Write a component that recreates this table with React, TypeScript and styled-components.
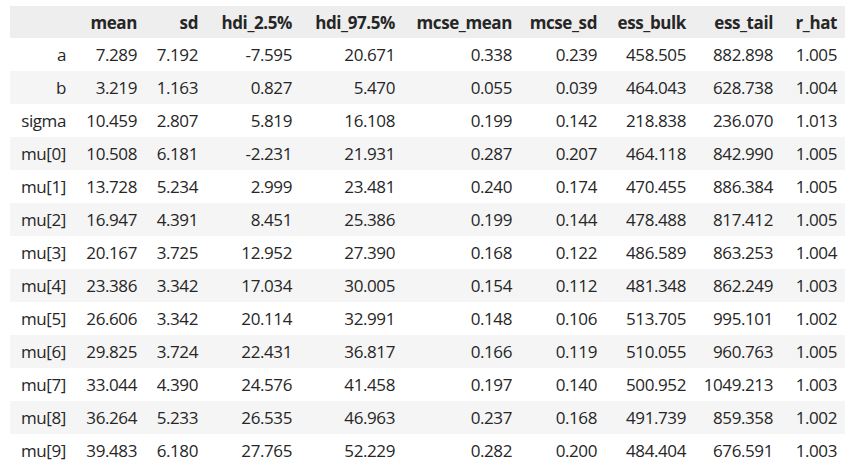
import React from "react";
import styled, { createGlobalStyle } from "styled-components";

const GlobalStyle = createGlobalStyle`
  html, body {
    margin: 0;
    padding: 0;
    background: #fff;
  }
  body {
    font-family: "Open Sans", "Noto Sans", "Liberation Sans", sans-serif;
  }
`;

const columns = [
  { key: "mean", width: 71 },
  { key: "sd", width: 61 },
  { key: "hdi_2.5%", width: 94 },
  { key: "hdi_97.5%", width: 103 },
  { key: "mcse_mean", width: 117 },
  { key: "mcse_sd", width: 85 },
  { key: "ess_bulk", width: 89 },
  { key: "ess_tail", width: 87 },
  { key: "r_hat", width: 64 },
];

const rows: [string, string[]][] = [
  ["a", ["7.289", "7.192", "-7.595", "20.671", "0.338", "0.239", "458.505", "882.898", "1.005"]],
  ["b", ["3.219", "1.163", "0.827", "5.470", "0.055", "0.039", "464.043", "628.738", "1.004"]],
  ["sigma", ["10.459", "2.807", "5.819", "16.108", "0.199", "0.142", "218.838", "236.070", "1.013"]],
  ["mu[0]", ["10.508", "6.181", "-2.231", "21.931", "0.287", "0.207", "464.118", "842.990", "1.005"]],
  ["mu[1]", ["13.728", "5.234", "2.999", "23.481", "0.240", "0.174", "470.455", "886.384", "1.005"]],
  ["mu[2]", ["16.947", "4.391", "8.451", "25.386", "0.199", "0.144", "478.488", "817.412", "1.005"]],
  ["mu[3]", ["20.167", "3.725", "12.952", "27.390", "0.168", "0.122", "486.589", "863.253", "1.004"]],
  ["mu[4]", ["23.386", "3.342", "17.034", "30.005", "0.154", "0.112", "481.348", "862.249", "1.003"]],
  ["mu[5]", ["26.606", "3.342", "20.114", "32.991", "0.148", "0.106", "513.705", "995.101", "1.002"]],
  ["mu[6]", ["29.825", "3.724", "22.431", "36.817", "0.166", "0.119", "510.055", "960.763", "1.005"]],
  ["mu[7]", ["33.044", "4.390", "24.576", "41.458", "0.197", "0.140", "500.952", "1049.213", "1.003"]],
  ["mu[8]", ["36.264", "5.233", "26.535", "46.963", "0.237", "0.168", "491.739", "859.358", "1.002"]],
  ["mu[9]", ["39.483", "6.180", "27.765", "52.229", "0.282", "0.200", "484.404", "676.591", "1.003"]],
];

const Wrapper = styled.div`
  padding: 6px 9px 0 10px;
`;

const Table = styled.table`
  border-collapse: collapse;
  border-spacing: 0;
  table-layout: fixed;
  width: 835px;
  color: #262626;
  font-size: 17px;
  letter-spacing: -0.4px;
`;

const HeadRow = styled.tr`
  background: #eeeeee;
  height: 32px;
`;

const BodyRow = styled.tr`
  height: 33px;
  &:nth-child(even) {
    background: #f5f5f5;
  }
`;

const HeadCell = styled.th`
  padding: 0 8px 0 0;
  text-align: right;
  font-weight: 700;
  white-space: nowrap;
  line-height: 1;
`;

const IndexCell = styled.th`
  padding: 0 8px 0 0;
  text-align: right;
  font-weight: 400;
  white-space: nowrap;
  line-height: 1;
`;

const Cell = styled.td`
  padding: 0 8px 0 0;
  text-align: right;
  white-space: nowrap;
  line-height: 1;
`;

export default function App() {
  return (
    <Wrapper>
      <GlobalStyle />
      <Table>
        <colgroup>
          <col style={{ width: 64 }} />
          {columns.map((c) => (
            <col key={c.key} style={{ width: c.width }} />
          ))}
        </colgroup>
        <thead>
          <HeadRow>
            <HeadCell />
            {columns.map((c) => (
              <HeadCell key={c.key}>{c.key}</HeadCell>
            ))}
          </HeadRow>
        </thead>
        <tbody>
          {rows.map(([name, values]) => (
            <BodyRow key={name}>
              <IndexCell>{name}</IndexCell>
              {values.map((v, i) => (
                <Cell key={i}>{v}</Cell>
              ))}
            </BodyRow>
          ))}
        </tbody>
      </Table>
    </Wrapper>
  );
}
